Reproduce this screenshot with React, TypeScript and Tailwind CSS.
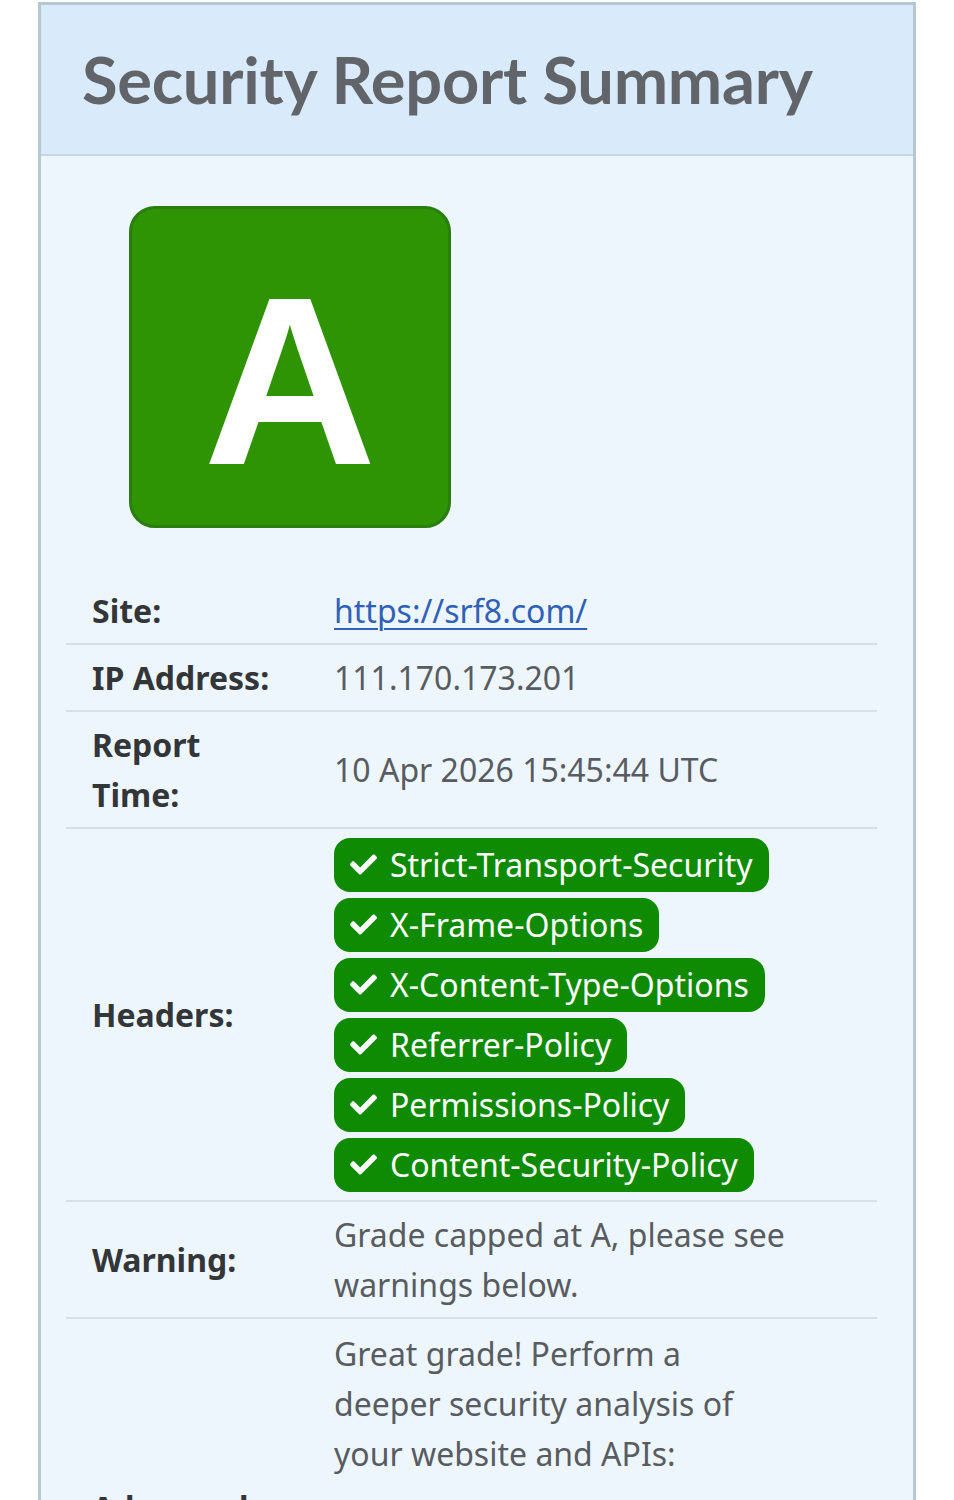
import { FaCheck } from 'react-icons/fa'

const headers = [
    'Strict-Transport-Security',
    'X-Frame-Options',
    'X-Content-Type-Options',
    'Referrer-Policy',
    'Permissions-Policy',
    'Content-Security-Policy',
]

function Row({ label, children, last }: { label: React.ReactNode; children: React.ReactNode; last?: boolean }) {
    return (
        <div className={`flex items-center py-[7.5px] ${last ? '' : 'border-b-2 border-[#d6e0e8]'}`}>
            <div className="w-[268px] shrink-0 pl-[26px] font-bold text-[#333639]">{label}</div>
            <div className="flex-1 pr-4 text-[#585c61]">{children}</div>
        </div>
    )
}

export default function App() {
    return (
        <div className="min-h-[1500px] bg-white pt-[2px] font-['Noto_Sans',sans-serif]">
            <div className="ml-[38px] w-[878px] border-[3px] border-b-0 border-[#b3c8d0] bg-[#eef6fd]">
                <div className="flex h-[151px] items-center border-b-2 border-[#c3d7e3] bg-[#d9ebfb] pl-[41px]">
                    <h1 className="font-['Lato',sans-serif] text-[65px] font-bold leading-none tracking-[-0.25px] text-[#616469]">
                        Security Report Summary
                    </h1>
                </div>

                <div className="pl-[25px] pr-[36px] pb-10">
                    <div className="ml-[63px] mt-[50px] flex h-[322px] w-[322px] items-center justify-center rounded-[26px] border-[3px] border-[#2a7e0e] bg-[#2f9404] pt-[28px]">
                        <span className="font-['Liberation_Sans',sans-serif] text-[240px] font-bold leading-none text-white">A</span>
                    </div>

                    <div className="mt-[50px] text-[32px] leading-[50px]">
                        <Row label="Site:">
                            <a href="#" className="text-[#2f62b6] underline decoration-2 underline-offset-[5px]">
                                https://srf8.com/
                            </a>
                        </Row>
                        <Row label="IP Address:">111.170.173.201</Row>
                        <Row label={<>Report<br />Time:</>}>10 Apr 2026 15:45:44 UTC</Row>
                        <Row label="Headers:">
                            <div className="flex flex-col items-start gap-[6px] py-[1px]">
                                {headers.map((h) => (
                                    <span
                                        key={h}
                                        className="flex h-[54px] items-center gap-[13px] rounded-[16px] bg-[#0f8a03] pl-[16px] pr-[16px] leading-none text-white"
                                    >
                                        <FaCheck className="h-[27px] w-[27px]" />
                                        {h}
                                    </span>
                                ))}
                            </div>
                        </Row>
                        <Row label="Warning:">Grade capped at A, please see<br />warnings below.</Row>
                        <Row label="Advanced:" last>
                            <div className="pt-[2px]">
                                Great grade! Perform a<br />deeper security analysis of<br />your website and APIs:
                                <div className="h-[210px]" />
                            </div>
                        </Row>
                    </div>
                </div>
            </div>
        </div>
    )
}
